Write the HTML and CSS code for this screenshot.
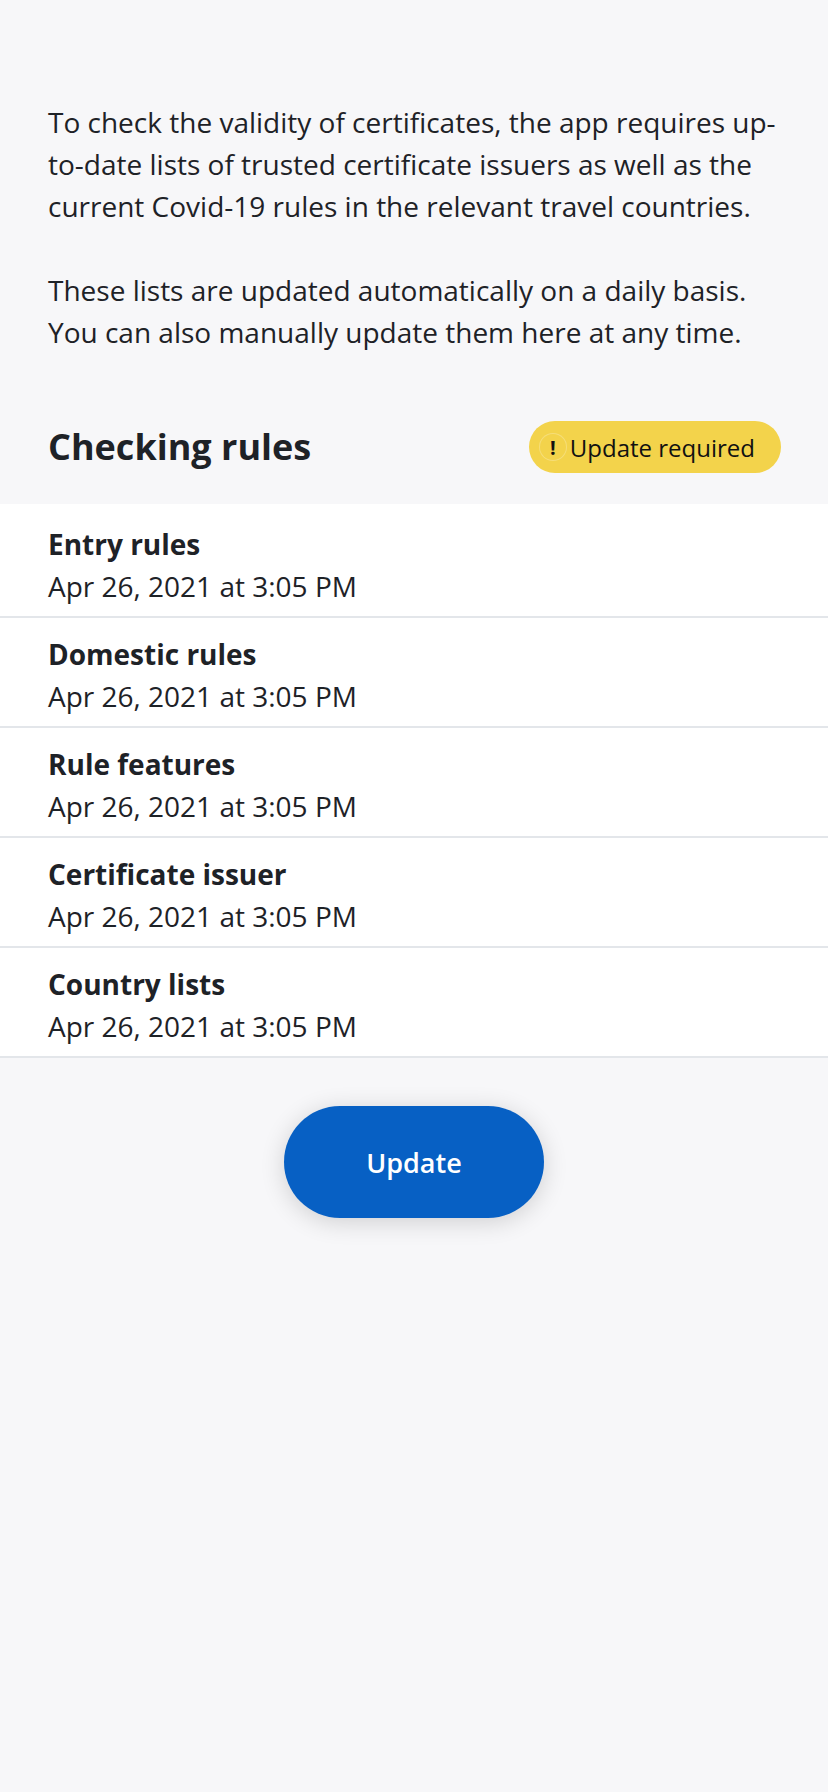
FILE: index.html
```html
<!DOCTYPE html>
<html lang="en">
<head>
<meta charset="utf-8">
<title>Checking rules</title>
<link rel="stylesheet" href="styles.css">
</head>
<body>
<main class="page">
  <section class="intro">
    <p>To check the validity of certificates, the app requires up-to-date lists of trusted certificate issuers as well as the current Covid-19 rules in the relevant travel countries.</p>
    <p>These lists are updated automatically on a daily basis. You can also manually update them here at any time.</p>
  </section>
  <header class="section-head">
    <h2 class="section-title">Checking rules</h2>
    <span class="badge"><span class="badge-icon">!</span><span class="badge-text">Update required</span></span>
  </header>
  <ul class="rule-list">
    <li class="rule"><span class="rule-name">Entry rules</span><span class="rule-date">Apr 26, 2021 at 3:05 PM</span></li>
    <li class="rule"><span class="rule-name">Domestic rules</span><span class="rule-date">Apr 26, 2021 at 3:05 PM</span></li>
    <li class="rule"><span class="rule-name">Rule features</span><span class="rule-date">Apr 26, 2021 at 3:05 PM</span></li>
    <li class="rule"><span class="rule-name">Certificate issuer</span><span class="rule-date">Apr 26, 2021 at 3:05 PM</span></li>
    <li class="rule"><span class="rule-name">Country lists</span><span class="rule-date">Apr 26, 2021 at 3:05 PM</span></li>
  </ul>
  <div class="actions">
    <button class="update-btn" type="button">Update</button>
  </div>
</main>
</body>
</html>
```
FILE: styles.css
```css
html, body {
  margin: 0;
  padding: 0;
  background: #f7f7f9;
}
body {
  font-family: "Open Sans", "Noto Sans", sans-serif;
  color: #1e2227;
  min-height: 1792px;
}
.page {
  display: flex;
  flex-direction: column;
}
.intro {
  padding: 101px 48px 0;
}
.intro p {
  margin: 0 0 42px;
  font-size: 28px;
  line-height: 42px;
}
.intro p:last-child {
  margin-bottom: 0;
}
.section-head {
  display: flex;
  align-items: center;
  justify-content: space-between;
  padding: 0 47px 0 48px;
  margin-top: 68px;
  height: 52px;
}
.section-title {
  margin: 0;
  font-size: 36px;
  font-weight: 700;
  line-height: 52px;
}
.badge {
  display: flex;
  align-items: center;
  gap: 4px;
  height: 52px;
  box-sizing: border-box;
  padding: 0 26px 0 11px;
  background: #f3d34b;
  border-radius: 26px;
  font-size: 24px;
  color: #111;
}
.badge-icon {
  width: 26px;
  height: 26px;
  border-radius: 50%;
  display: flex;
  align-items: center;
  justify-content: center;
  font-weight: 700;
  font-size: 20px;
  box-shadow: 0 0 0 1px rgba(255, 255, 255, 0.25);
}
.rule-list {
  list-style: none;
  margin: 31px 0 0;
  padding: 4px 0 0;
  background: #fff;
}
.rule {
  display: flex;
  flex-direction: column;
  padding: 15px 48px 9px;
  border-bottom: 2px solid #e3e6ea;
  font-size: 28px;
  line-height: 42px;
}
.rule-name {
  font-weight: 700;
}
.actions {
  display: flex;
  justify-content: center;
  padding-top: 48px;
}
.update-btn {
  width: 260px;
  height: 112px;
  border: none;
  border-radius: 56px;
  background: #0760c4;
  color: #fff;
  font-family: inherit;
  font-size: 27px;
  font-weight: 600;
  box-shadow: 0 4px 24px rgba(0, 0, 0, 0.16);
}
```
